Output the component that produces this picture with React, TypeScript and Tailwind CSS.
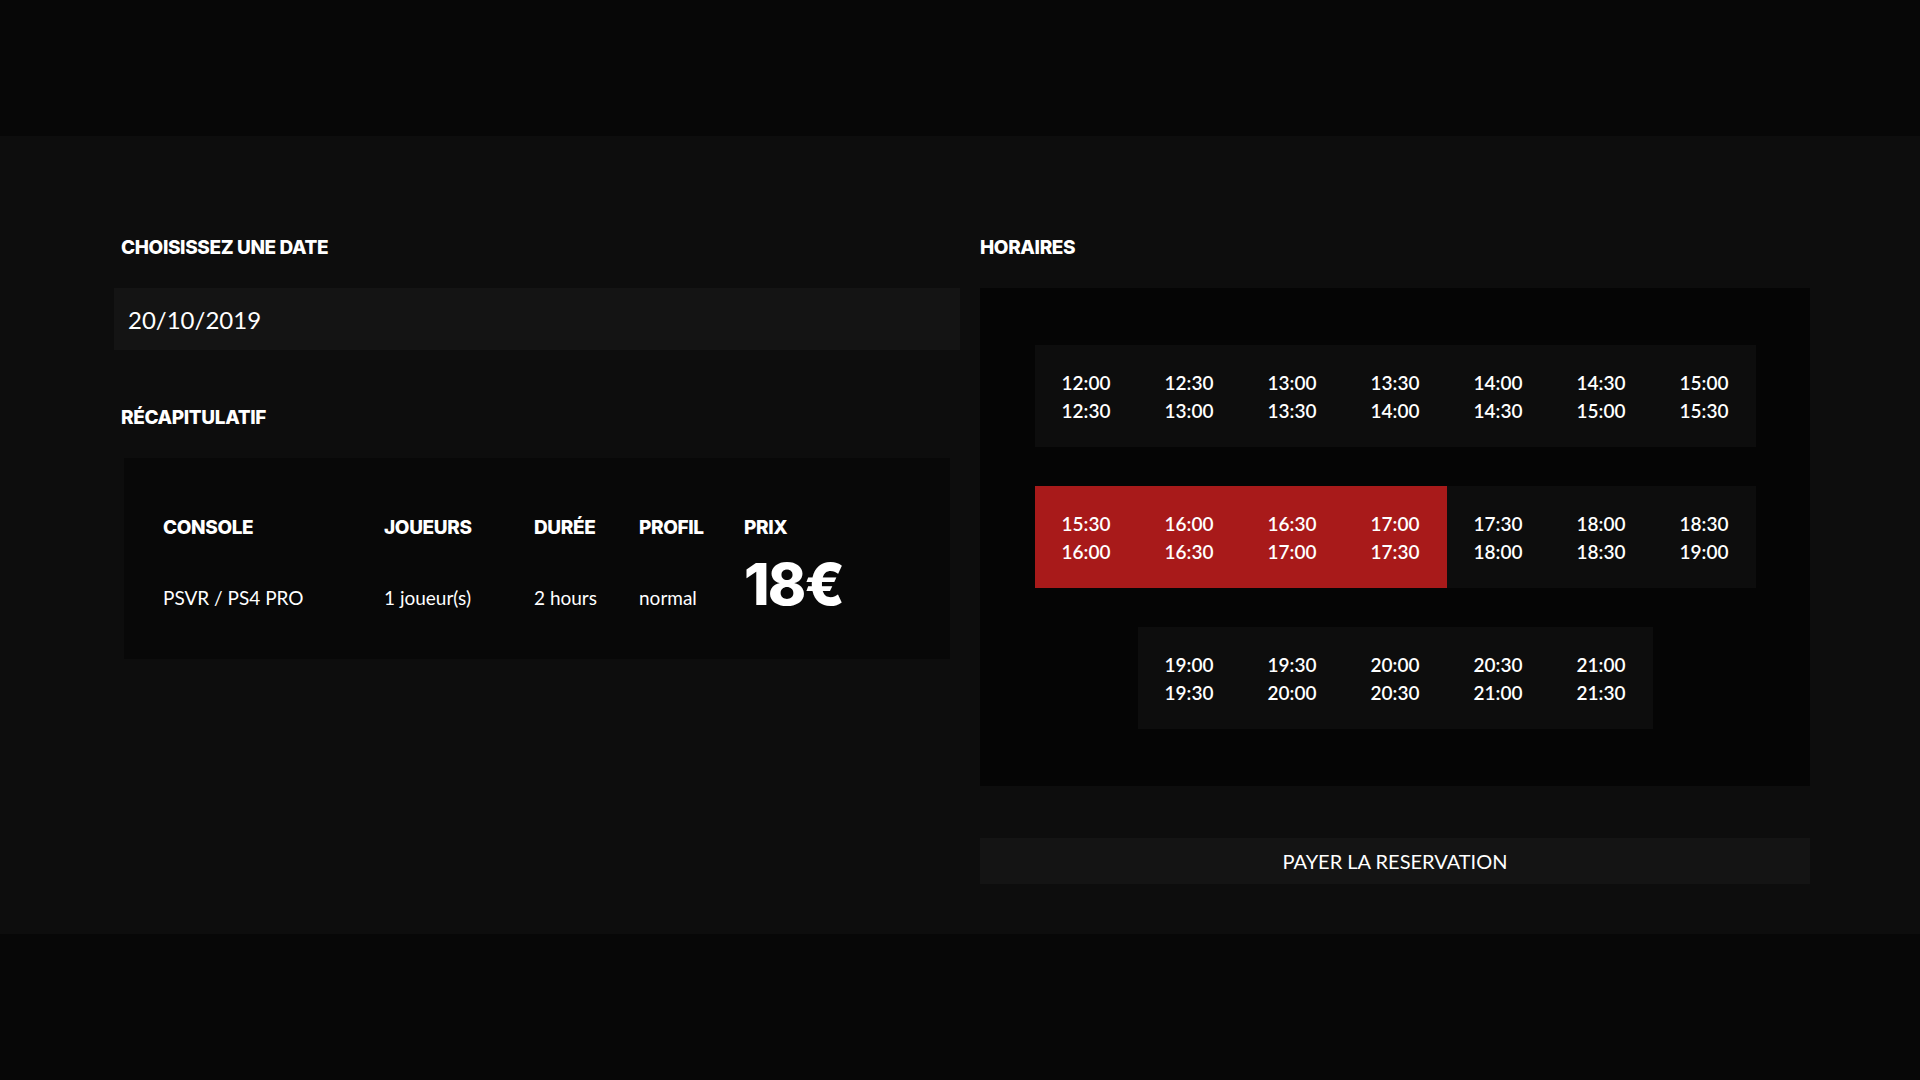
import { useState } from "react";

const heading = "font-['Inter','Liberation_Sans',sans-serif] font-extrabold uppercase tracking-[-0.02em] text-white";
const body = "font-['Lato','Open_Sans',sans-serif] text-white";

const rows: string[][] = [
    ["12:00", "12:30", "13:00", "13:30", "14:00", "14:30", "15:00"],
    ["15:30", "16:00", "16:30", "17:00", "17:30", "18:00", "18:30"],
    ["19:00", "19:30", "20:00", "20:30", "21:00"],
];

function addHalf(t: string) {
    const [h, m] = t.split(":").map(Number);
    const total = h * 60 + m + 30;
    return `${Math.floor(total / 60)}:${total % 60 === 0 ? "00" : "30"}`;
}

export default function App() {
    const [selected] = useState(["15:30", "16:00", "16:30", "17:00"]);

    return (
        <div className="min-h-screen bg-[#070707]">
            {/* top band */}
            <div className="h-[136px]" />

            {/* booking section */}
            <section className="bg-[#0d0d0d] pt-[100px] pb-[50px]">
                <div className="flex gap-5 pl-[114px]">
                    {/* left column */}
                    <div className="w-[846px]">
                        <h2 className={`${heading} text-[19px] leading-6 pl-[7px]`}>Choisissez une date</h2>
                        <div className="mt-7 flex h-[62px] items-center bg-[#141414] pl-[14px]">
                            <span className={`${body} mt-[2px] text-[24px]`}>20/10/2019</span>
                        </div>

                        <h2 className={`${heading} text-[19px] leading-6 pl-[7px] mt-[56px]`}>Récapitulatif</h2>
                        <div className="ml-[10px] mr-[10px] mt-[28px] h-[201px] bg-[#080808] pl-[39px] pt-[58px]">
                            <div className="flex">
                                <div className={`${heading} w-[221px] text-[19px] leading-6`}>Console</div>
                                <div className={`${heading} w-[150px] text-[19px] leading-6`}>Joueurs</div>
                                <div className={`${heading} w-[105px] text-[19px] leading-6`}>Durée</div>
                                <div className={`${heading} w-[105px] text-[19px] leading-6`}>Profil</div>
                                <div className={`${heading} text-[19px] leading-6`}>Prix</div>
                            </div>
                            <div className="mt-[12px] flex items-baseline">
                                <div className={`${body} w-[221px] text-[19px]`}>PSVR / PS4 PRO</div>
                                <div className={`${body} w-[150px] text-[19px]`}>1 joueur(s)</div>
                                <div className={`${body} w-[105px] text-[19px]`}>2 hours</div>
                                <div className={`${body} w-[105px] text-[19px]`}>normal</div>
                                <div className="font-['Inter','Liberation_Sans',sans-serif] text-[58px] font-extrabold leading-[64px] tracking-[-0.03em] text-white">18€</div>
                            </div>
                        </div>
                    </div>

                    {/* right column */}
                    <div className="w-[830px]">
                        <h2 className={`${heading} text-[19px] leading-6`}>Horaires</h2>
                        <div className="mt-7 flex flex-col items-center gap-[39px] bg-[#050505] py-[57px]">
                            {rows.map((row, i) => (
                                <div key={i} className="flex bg-[#0d0d0d]">
                                    {row.map(t => {
                                        const on = selected.includes(t);
                                        return (
                                            <div
                                                key={t}
                                                className={`flex h-[102px] w-[103px] flex-col items-center justify-center pt-[2px] ${on ? "bg-[#a81a1a]" : ""}`}
                                            >
                                                <span className={`${body} text-[19px] font-semibold leading-[28px]`}>{t}</span>
                                                <span className={`${body} text-[19px] font-semibold leading-[28px]`}>{addHalf(t)}</span>
                                            </div>
                                        );
                                    })}
                                </div>
                            ))}
                        </div>
                        <button className="mt-[52px] flex h-[46px] w-full items-center justify-center bg-[#141414]">
                            <span className={`${body} text-[20px] uppercase`}>Payer la reservation</span>
                        </button>
                    </div>
                </div>
            </section>
        </div>
    );
}
